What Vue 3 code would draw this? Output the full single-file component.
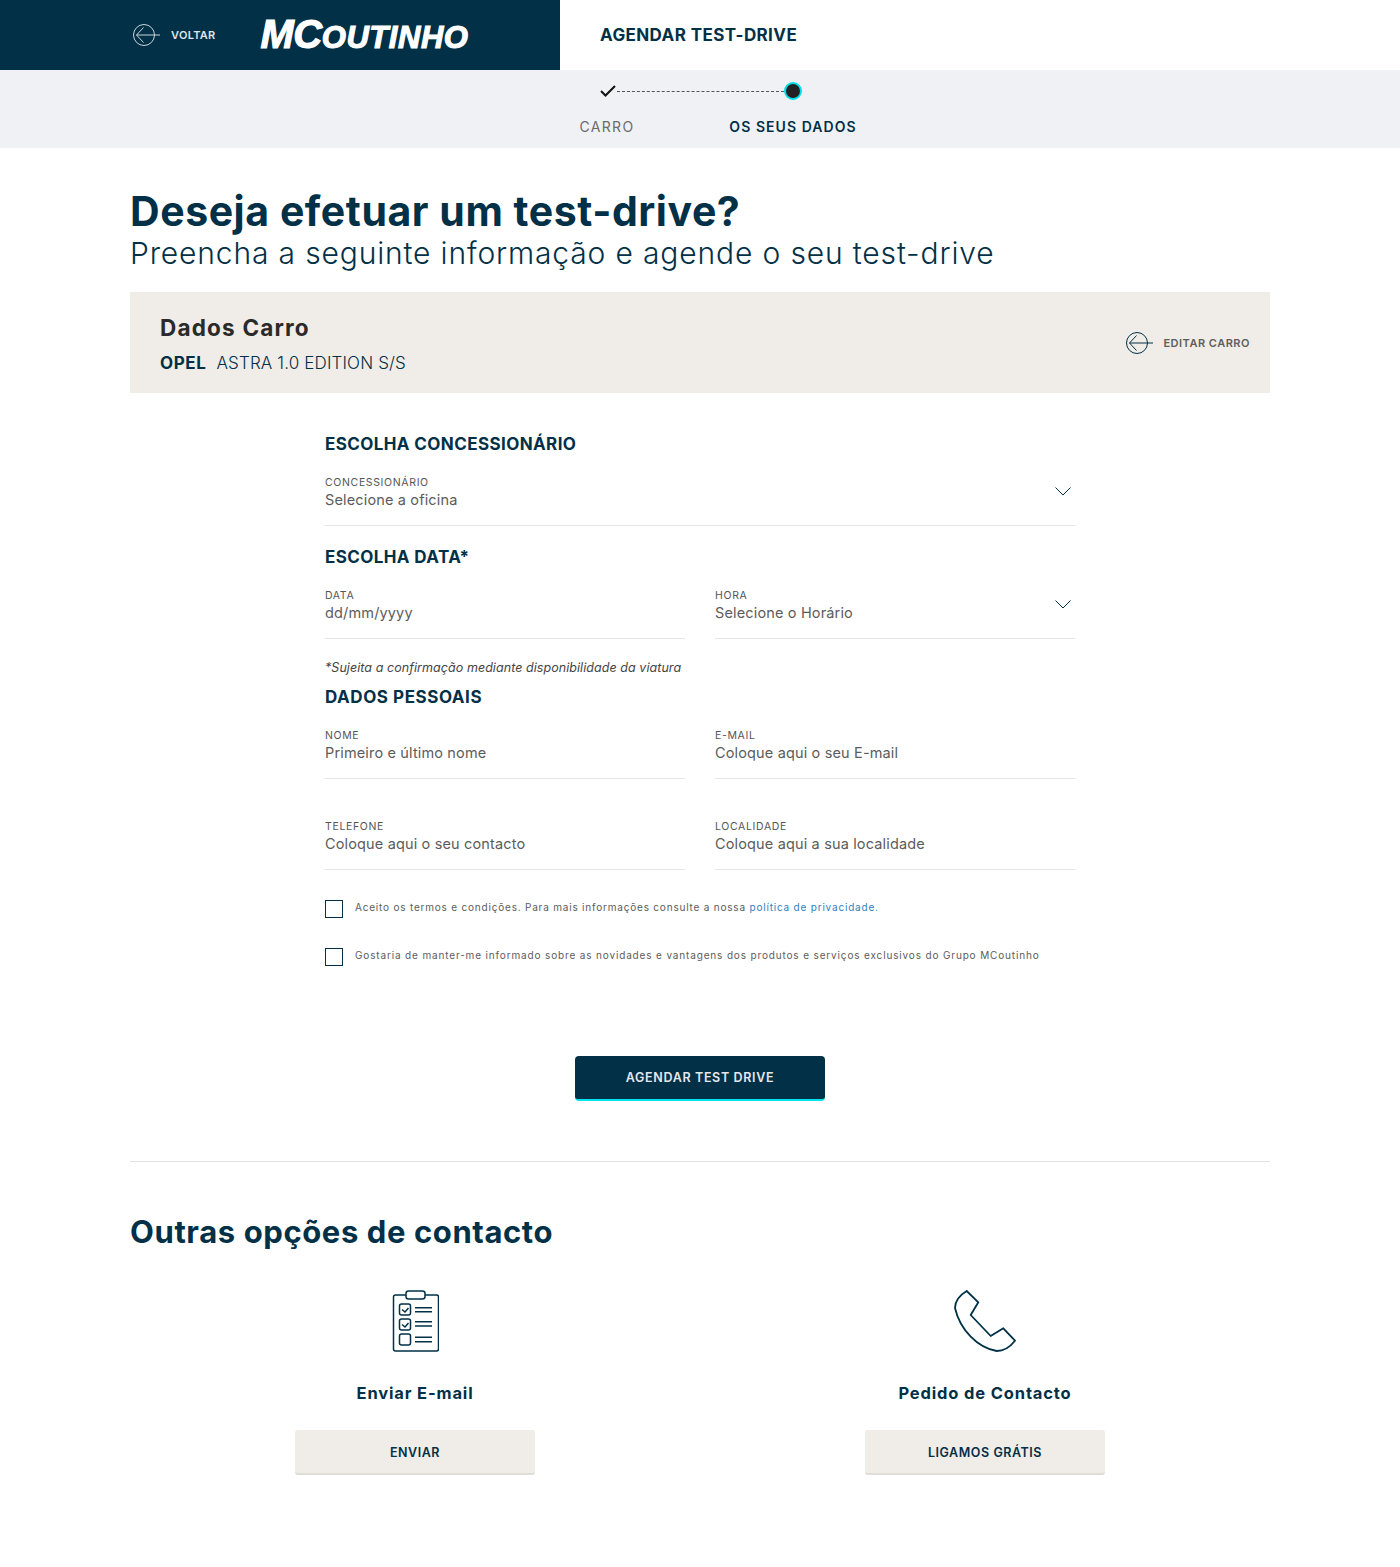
<template>
  <div class="page">
    <header class="top">
      <div class="top-left">
        <a class="back">
          <svg class="arrow" width="30" height="24" viewBox="0 0 30 24" fill="none" stroke="#c9d3da" stroke-width="1">
            <circle cx="13" cy="12" r="10.5" />
            <path d="M29 12H5.500M12.500 4.500 5.500 12l7 7.500" />
          </svg>
          <span>VOLTAR</span>
        </a>
        <div class="logo"><span class="logo-big">MC</span>OUTINHO</div>
      </div>
      <div class="top-right">AGENDAR TEST-DRIVE</div>
    </header>

    <section class="steps">
      <div class="track">
        <svg width="16" height="12" viewBox="0 0 16 12" fill="none" stroke="#111" stroke-width="2"><path d="M1 6l4.500 4.500L15 1" /></svg>
        <span class="dash"></span>
        <span class="dot"></span>
      </div>
      <div class="step-labels">
        <span class="step-label">CARRO</span>
        <span class="step-label on">OS SEUS DADOS</span>
      </div>
    </section>

    <main class="wrap">
      <h1>Deseja efetuar um test-drive?</h1>
      <p class="sub">Preencha a seguinte informação e agende o seu test-drive</p>

      <div class="car">
        <div>
          <h2>Dados Carro</h2>
          <p class="car-name"><b>OPEL</b>ASTRA 1.0 EDITION S/S</p>
        </div>
        <a class="edit">
          <svg width="30" height="24" viewBox="0 0 30 24" fill="none" stroke="#023047" stroke-width="1">
            <circle cx="13" cy="12" r="10.5" />
            <path d="M29 12H5.500M12.500 4.500 5.500 12l7 7.500" />
          </svg>
          <span>EDITAR CARRO</span>
        </a>
      </div>

      <form class="form" @submit.prevent>
        <h3>ESCOLHA CONCESSIONÁRIO</h3>
        <div class="field select">
          <label>CONCESSIONÁRIO</label>
          <div class="val">Selecione a oficina</div>
          <svg class="chev" width="16" height="9" viewBox="0 0 16 9" fill="none" stroke="#023047"><path d="M.5.5 8 8 15.500.5" /></svg>
        </div>

        <h3 class="h-date">ESCOLHA DATA*</h3>
        <div class="row">
          <div class="field">
            <label>DATA</label>
            <div class="val">dd/mm/yyyy</div>
          </div>
          <div class="field select">
            <label>HORA</label>
            <div class="val">Selecione o Horário</div>
            <svg class="chev" width="16" height="9" viewBox="0 0 16 9" fill="none" stroke="#023047"><path d="M.5.5 8 8 15.500.5" /></svg>
          </div>
        </div>
        <p class="note">*Sujeita a confirmação mediante disponibilidade da viatura</p>

        <h3 class="h-personal">DADOS PESSOAIS</h3>
        <div class="row" v-for="(r, i) in personal" :key="i" :class="{ 'row-gap': i > 0 }">
          <div class="field" v-for="f in r" :key="f.label">
            <label>{{ f.label }}</label>
            <div class="val">{{ f.hint }}</div>
          </div>
        </div>

        <div class="check first">
          <span class="box"></span>
          <span>Aceito os termos e condições. Para mais informações consulte a nossa <a class="link">política de privacidade.</a></span>
        </div>
        <div class="check">
          <span class="box"></span>
          <span>Gostaria de manter-me informado sobre as novidades e vantagens dos produtos e serviços exclusivos do Grupo MCoutinho</span>
        </div>

        <button class="submit" type="button">AGENDAR TEST DRIVE</button>
      </form>

      <hr />

      <h2 class="other">Outras opções de contacto</h2>
      <div class="contacts">
        <div class="contact">
          <svg class="ic" width="48" height="62" viewBox="0 0 48 62" fill="none" stroke="#023047" stroke-width="1.500">
            <path d="M15 5H4.500a2 2 0 0 0-2 2v52a2 2 0 0 0 2 2h41a2 2 0 0 0 2-2V7a2 2 0 0 0-2-2H34" />
            <rect x="15" y="1" width="19" height="8" rx="2.500" />
            <rect x="8.500" y="14" width="11" height="11" rx="2" />
            <rect x="8.500" y="29" width="11" height="11" rx="2" />
            <rect x="8.500" y="44" width="11" height="11" rx="2" />
            <path d="M11 19.500l3 2.500 3.500-4M11 34.500l3 2.500 3.500-4" />
            <path d="M24 17.700h17M24 21.700h17M24 31.700h17M24 36h17M24 47.300h17M24 51.700h17" />
          </svg>
          <h4>Enviar E-mail</h4>
          <button class="ghost" type="button">ENVIAR</button>
        </div>
        <div class="contact">
          <svg class="ic" width="62" height="62" viewBox="0 0 62 62" fill="none" stroke="#023047" stroke-width="1.800" stroke-linejoin="round">
            <path d="M12.700 1 24.300 12.300 16.700 25 36.700 46 49.300 38.300 61 50.700C56 57 50 61 42.700 61 24 58 6 40 1 18 1 11 6 5 12.700 1Z" />
          </svg>
          <h4>Pedido de Contacto</h4>
          <button class="ghost" type="button">LIGAMOS GRÁTIS</button>
        </div>
      </div>
    </main>
  </div>
</template>

<script setup>
const personal = [
  [
    { label: 'NOME', hint: 'Primeiro e último nome' },
    { label: 'E-MAIL', hint: 'Coloque aqui o seu E-mail' }
  ],
  [
    { label: 'TELEFONE', hint: 'Coloque aqui o seu contacto' },
    { label: 'LOCALIDADE', hint: 'Coloque aqui a sua localidade' }
  ]
]
</script>

<style>
html, body { margin: 0; background: #fff; }
</style>

<style scoped>
.page { font-family: Inter, "Liberation Sans", sans-serif; color: #023047; min-height: 1567px; }
h1, h2, h3, h4, p { margin: 0; }

.top { display: flex; height: 70px; }
.top-left { width: 560px; box-sizing: border-box; background: #023047; display: flex; align-items: center; padding-left: 131px; }
.back { display: flex; align-items: center; gap: 10px; color: #dfe5ea; font-size: 11px; font-weight: 600; letter-spacing: .3px; margin-right: 45px; }
.arrow { display: block; }
.logo { font-family: "Liberation Sans", sans-serif; font-weight: 700; font-style: italic; color: #fff; font-size: 31px; line-height: 1; -webkit-text-stroke: 1.1px #fff; letter-spacing: .55px; padding-bottom: 2px; }
.logo-big { font-size: 40px; letter-spacing: -.5px; }
.top-right { padding-left: 40px; display: flex; align-items: center; font-size: 17px; font-weight: 700; letter-spacing: .4px; }

.steps { height: 78px; background: #eff1f5; display: flex; flex-direction: column; align-items: center; }
.track { width: 204px; box-sizing: border-box; padding-left: 2px; margin-top: 11px; height: 20px; display: flex; align-items: center; }
.dash { flex: 1; border-top: 1px dashed #555; margin-left: 1px; }
.dot { width: 14px; height: 14px; border-radius: 50%; background: #222; border: 2px solid #00e0e6; }
.step-labels { display: flex; justify-content: center; margin-top: 17px; line-height: 18px; font-size: 14px; letter-spacing: 1.3px; }
.step-label { width: 186px; text-align: center; color: #6b6b6b; }
.step-label.on { color: #023047; font-weight: 600; letter-spacing: 1.05px; }

.wrap { padding: 0 130px; }
h1 { font-size: 41px; font-weight: 700; line-height: 50px; padding-top: 38px; letter-spacing: .55px; }
.sub { font-size: 30px; font-weight: 300; line-height: 36px; letter-spacing: .85px; margin-top: -1px; }

.car { margin-top: 21px; height: 101px; background: #f0ece7; box-sizing: border-box; padding: 0 20px 0 30px; display: flex; justify-content: space-between; align-items: center; }
.car h2 { font-size: 22.500px; font-weight: 700; color: #2a2a2a; line-height: 28px; letter-spacing: 1.2px; margin-top: 3px; }
.car-name { margin-top: 9px; font-size: 17px; font-weight: 300; line-height: 24px; letter-spacing: .15px; }
.car-name b { font-weight: 700; margin-right: 10px; letter-spacing: .6px; }
.edit { display: flex; align-items: center; gap: 9px; font-size: 11px; font-weight: 600; color: #5e5e5e; letter-spacing: .5px; }
.edit svg { display: block; }

.form { width: 750px; margin: 0 auto; padding-top: 40px; }
h3 { font-size: 17px; font-weight: 700; line-height: 22px; letter-spacing: .4px; }
.h-date { margin-top: 20px; }
.h-personal { margin-top: 10px; letter-spacing: .55px; }
.row { display: grid; grid-template-columns: 360px 360px; column-gap: 30px; }
.row-gap { margin-top: 20px; }
.field { position: relative; height: 71px; box-sizing: border-box; padding-top: 21px; border-bottom: 1px solid #e3e3ee; }
label { display: block; font-size: 10.500px; line-height: 14px; letter-spacing: .65px; color: #555; }
.val { font-size: 14.500px; line-height: 22px; color: #5c5c5c; margin-top: -1px; letter-spacing: .15px; }
.chev { position: absolute; right: 4px; top: 32px; }
.note { font-size: 12.500px; font-style: italic; color: #444; line-height: 16px; margin-top: 21px; letter-spacing: .06px; }

.check { display: flex; align-items: flex-start; gap: 12px; font-size: 10px; letter-spacing: .85px; color: #5c5c5c; line-height: 16px; margin-top: 30px; }
.check.first { letter-spacing: .8px; }
.check > span:last-child { margin-top: -1px; }
.box { width: 16px; height: 16px; flex: none; border: 1px solid #023047; }
.link { color: #2f7fc1; }

.submit { display: block; width: 250px; height: 45px; margin: 90px auto 0; padding-bottom: 1px; background: #023047; color: #e4e8ec; border: 0; border-bottom: 2px solid #00e5ee; border-radius: 4px; font: 600 12.500px Inter, sans-serif; letter-spacing: .65px; }

hr { border: 0; border-top: 1px solid #e2e2e2; margin: 60px 0 0; }

.other { font-size: 31px; font-weight: 700; line-height: 40px; margin-top: 50px; letter-spacing: .6px; }
.contacts { display: flex; justify-content: space-between; padding: 0 165px; margin-top: 38px; }
.contact { width: 240px; display: flex; flex-direction: column; align-items: center; }
.ic { display: block; height: 62px; }
.contact h4 { font-size: 16.500px; font-weight: 700; line-height: 22px; margin-top: 30px; letter-spacing: .85px; }
.ghost { width: 240px; height: 45px; margin-top: 26px; padding-top: 2px; background: #f0ece7; border: 0; border-bottom: 2px solid #e0dcd7; border-radius: 3px; color: #023047; font: 600 12.500px Inter, sans-serif; letter-spacing: .55px; }
</style>
